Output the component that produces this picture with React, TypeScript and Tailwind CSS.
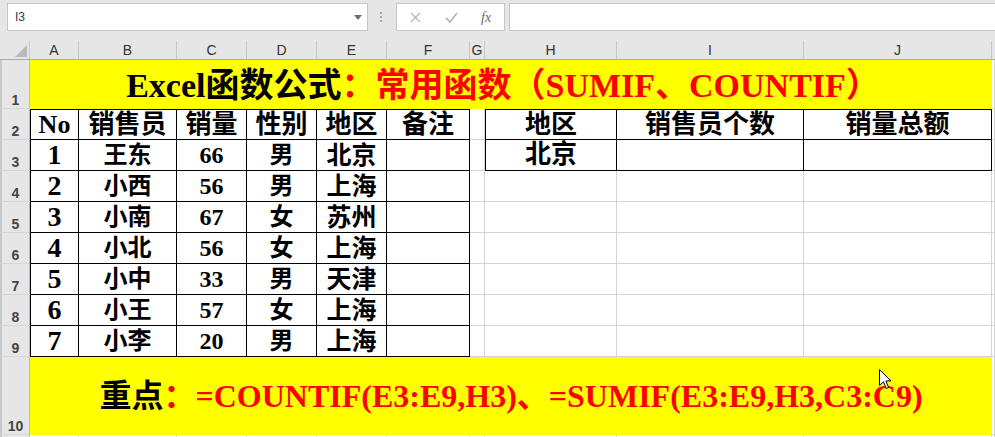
import React from "react";

const serif = "font-['Liberation_Serif','Noto_Sans_CJK_SC',serif] font-bold";
const ui = "font-['Liberation_Sans','Noto_Sans',sans-serif]";

// light gridline vs. black table border
const grid = "border-r border-b border-[#d4d4d4]";
const line = "border-r border-b border-black";

const sales = [
  { no: "1", name: "王东", qty: "66", sex: "男", area: "北京" },
  { no: "2", name: "小西", qty: "56", sex: "男", area: "上海" },
  { no: "3", name: "小南", qty: "67", sex: "女", area: "苏州" },
  { no: "4", name: "小北", qty: "56", sex: "女", area: "上海" },
  { no: "5", name: "小中", qty: "33", sex: "男", area: "天津" },
  { no: "6", name: "小王", qty: "57", sex: "女", area: "上海" },
  { no: "7", name: "小李", qty: "20", sex: "男", area: "上海" },
];

const columns = [
  { key: "A", w: "w-[49px]" },
  { key: "B", w: "w-[98px]" },
  { key: "C", w: "w-[70px]" },
  { key: "D", w: "w-[70px]" },
  { key: "E", w: "w-[70px]" },
  { key: "F", w: "w-[83px]" },
  { key: "G", w: "w-[15px]" },
  { key: "H", w: "w-[132px]" },
  { key: "I", w: "w-[187px]" },
  { key: "J", w: "w-[188px]" },
];

function RowNum({ n }: { n: number }) {
  return (
    <div
      className={`w-[30px] shrink-0 flex items-end justify-center bg-[#e6e6e6] border-l-2 border-l-[#c8c8c8] border-r border-r-[#bdbdbd] border-b border-b-[#d6d6d6] text-[14px] leading-[15px] text-[#444] ${ui}`}
    >
      {n}
    </div>
  );
}

function Cell({
  w,
  cls = "",
  children,
}: {
  w: string;
  cls?: string;
  children?: React.ReactNode;
}) {
  return (
    <div className={`${w} shrink-0 flex items-center justify-center leading-none ${cls}`}>
      {children}
    </div>
  );
}

function FormulaBar() {
  return (
    <div className="flex h-[41px] items-start bg-[#e6e6e6] pt-[3px]">
      {/* Name box */}
      <div className="ml-[7px] flex h-[28px] w-[361px] items-center justify-between border border-[#c6c6c6] bg-white pl-[7px] pr-[5px]">
        <span className={`text-[12px] text-[#1e3a5f] ${ui}`}>I3</span>
        <svg width="8" height="5" viewBox="0 0 8 5">
          <path d="M0 0 H8 L4 5 Z" fill="#6f6f6f" />
        </svg>
      </div>
      {/* grip dots */}
      <div className="ml-[12px] mt-[9px] flex flex-col gap-[2px]">
        <span className="h-[2px] w-[2px] bg-[#a8a8a8]" />
        <span className="h-[2px] w-[2px] bg-[#a8a8a8]" />
        <span className="h-[2px] w-[2px] bg-[#a8a8a8]" />
      </div>
      {/* cancel / enter / fx */}
      <div className="ml-[14px] flex h-[28px] w-[109px] items-center border border-[#c6c6c6] bg-white">
        <div className="flex w-[38px] justify-center">
          <svg width="11" height="11" viewBox="0 0 11 11">
            <path d="M1 1 L10 10 M10 1 L1 10" stroke="#b8b8b8" strokeWidth="1.4" />
          </svg>
        </div>
        <div className="flex w-[34px] justify-center">
          <svg width="13" height="11" viewBox="0 0 13 11">
            <path d="M1 6 L5 10 L12 1" stroke="#b8b8b8" strokeWidth="1.8" fill="none" />
          </svg>
        </div>
        <div className="flex w-[36px] justify-center">
          <span className="font-['Liberation_Serif',serif] text-[14px] italic text-[#6b6b6b]">fx</span>
        </div>
      </div>
      {/* formula input */}
      <div className="ml-[4px] h-[28px] flex-1 border border-r-0 border-[#c6c6c6] bg-white" />
    </div>
  );
}

function ColumnHeaders() {
  return (
    <div className={`flex h-[19px] bg-[#e6e6e6] border-b border-[#ababab] text-[14px] text-[#333] ${ui}`}>
      <div className="flex w-[30px] shrink-0 items-end justify-end border-r border-[#c8c8c8] pb-[2px] pr-[2px]">
        <svg width="12" height="12" viewBox="0 0 12 12">
          <path d="M12 0 V12 H0 Z" fill="#b9b9b9" />
        </svg>
      </div>
      {columns.map((c) => (
        <div
          key={c.key}
          className={`${c.w} shrink-0 flex items-center justify-center border-r border-[#c8c8c8] leading-none`}
        >
          {c.key}
        </div>
      ))}
      <div className="flex-1" />
    </div>
  );
}

export default function App() {
  return (
    <div className="relative h-[437px] w-[995px] overflow-hidden bg-white">
      <FormulaBar />
      <ColumnHeaders />

      <div className={`${serif} text-black`}>
        {/* Row 1 — title */}
        <div className="flex h-[49px]">
          <RowNum n={1} />
          <div className="flex w-[962px] shrink-0 items-center justify-center bg-[#ffff00] pt-[2px] pr-[16px] text-[34px] leading-none">
            <span>Excel函数公式</span>
            <span className="text-[#ff0000]">：常用函数（SUMIF、COUNTIF）</span>
          </div>
          <div className={`flex-1 ${grid}`} />
        </div>

        {/* Row 2 — headers */}
        <div className="flex h-[31px] text-[26px]">
          <RowNum n={2} />
          <Cell w="w-[49px]" cls={`${line} border-l border-t`}>No</Cell>
          <Cell w="w-[98px]" cls={`${line} border-t`}>销售员</Cell>
          <Cell w="w-[70px]" cls={`${line} border-t`}>销量</Cell>
          <Cell w="w-[70px]" cls={`${line} border-t`}>性别</Cell>
          <Cell w="w-[70px]" cls={`${line} border-t`}>地区</Cell>
          <Cell w="w-[83px]" cls={`${line} border-t`}>备注</Cell>
          <Cell w="w-[15px]" cls={grid} />
          <Cell w="w-[132px]" cls={`${line} border-l border-t`}>地区</Cell>
          <Cell w="w-[187px]" cls={`${line} border-t`}>销售员个数</Cell>
          <Cell w="w-[188px]" cls={`${line} border-t`}>销量总额</Cell>
          <div className={`flex-1 ${grid}`} />
        </div>

        {/* Rows 3-9 — data */}
        {sales.map((r, i) => (
          <div key={r.no} className="flex h-[31px]">
            <RowNum n={i + 3} />
            <Cell w="w-[49px]" cls={`${line} border-l text-[28px]`}>{r.no}</Cell>
            <Cell w="w-[98px]" cls={`${line} text-[24px]`}>{r.name}</Cell>
            <Cell w="w-[70px]" cls={`${line} text-[24px]`}>{r.qty}</Cell>
            <Cell w="w-[70px]" cls={`${line} text-[24px]`}>{r.sex}</Cell>
            <Cell w="w-[70px]" cls={`${line} text-[25px]`}>{r.area}</Cell>
            <Cell w="w-[83px]" cls={line} />
            <Cell w="w-[15px]" cls={grid} />
            {i === 0 ? (
              <>
                <Cell w="w-[132px]" cls={`${line} border-l text-[26px]`}>北京</Cell>
                <Cell w="w-[187px]" cls={line} />
                <Cell w="w-[188px]" cls={line} />
              </>
            ) : (
              <>
                <Cell w="w-[132px]" cls={grid} />
                <Cell w="w-[187px]" cls={grid} />
                <Cell w="w-[188px]" cls={grid} />
              </>
            )}
            <div className={`flex-1 ${grid}`} />
          </div>
        ))}

        {/* Row 10 — key formula */}
        <div className="flex h-[78px]">
          <RowNum n={10} />
          <div className="flex w-[962px] shrink-0 items-center justify-center bg-[#ffff00] text-[32px] leading-none">
            <span>重点</span>
            <span className="text-[#ff0000]">：=COUNTIF(E3:E9,H3)、=SUMIF(E3:E9,H3,C3:C9)</span>
          </div>
          <div className={`flex-1 ${grid}`} />
        </div>

        {/* Row 11 — partly visible */}
        <div className="flex h-[20px]">
          <div className="w-[30px] shrink-0 bg-[#e6e6e6] border-l-2 border-l-[#c8c8c8] border-r border-r-[#bdbdbd]" />
          {columns.map((c) => (
            <div key={c.key} className={`${c.w} shrink-0 ${grid}`} />
          ))}
          <div className={`flex-1 ${grid}`} />
        </div>
      </div>

      {/* mouse pointer */}
      <svg
        className="absolute left-[879px] top-[369px]"
        width="13"
        height="21"
        viewBox="0 0 13 21"
      >
        <path
          d="M0.5 0.5 L0.5 16.5 L4.5 12.8 L7.3 19.5 L9.6 18.5 L6.9 11.9 L12 11.9 Z"
          fill="#ffffff"
          stroke="#000000"
          strokeWidth="1"
          strokeLinejoin="round"
        />
      </svg>
    </div>
  );
}
